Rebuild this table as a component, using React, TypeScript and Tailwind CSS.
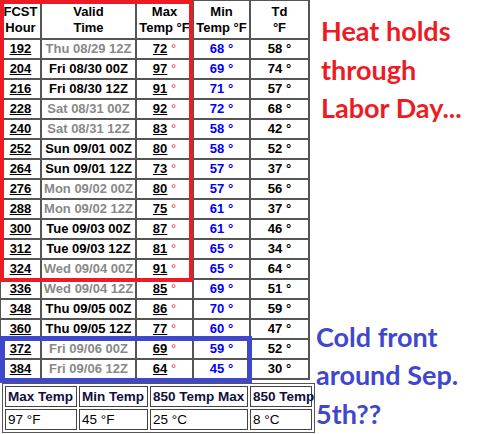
type Row = [string, string, boolean, string, string, string];

const rows: Row[] = [
    ['192', 'Thu 08/29 12Z', true, '72', '68', '58'],
    ['204', 'Fri 08/30 00Z', false, '97', '69', '74'],
    ['216', 'Fri 08/30 12Z', false, '91', '71', '57'],
    ['228', 'Sat 08/31 00Z', true, '92', '72', '68'],
    ['240', 'Sat 08/31 12Z', true, '83', '58', '42'],
    ['252', 'Sun 09/01 00Z', false, '80', '58', '52'],
    ['264', 'Sun 09/01 12Z', false, '73', '57', '37'],
    ['276', 'Mon 09/02 00Z', true, '80', '57', '56'],
    ['288', 'Mon 09/02 12Z', true, '75', '61', '37'],
    ['300', 'Tue 09/03 00Z', false, '87', '61', '46'],
    ['312', 'Tue 09/03 12Z', false, '81', '65', '34'],
    ['324', 'Wed 09/04 00Z', true, '91', '65', '64'],
    ['336', 'Wed 09/04 12Z', true, '85', '69', '51'],
    ['348', 'Thu 09/05 00Z', false, '86', '70', '59'],
    ['360', 'Thu 09/05 12Z', false, '77', '60', '47'],
    ['372', 'Fri 09/06 00Z', true, '69', '59', '52'],
    ['384', 'Fri 09/06 12Z', true, '64', '45', '30'],
];

const cell = "border-2 border-[#555] p-0 text-center align-middle";

const ForecastTable = () => {
    return (
        <table className="table-fixed border-collapse w-[309px] -ml-[1px] -mt-[1px] text-[13px] font-bold leading-[16px]">
            <colgroup>
                <col className="w-[41px]" />
                <col className="w-[95px]" />
                <col className="w-[57px]" />
                <col className="w-[57px]" />
                <col className="w-[59px]" />
            </colgroup>
            <thead>
                <tr className="h-[39px]">
                    <th className={cell + " font-bold"}>FCST<br />Hour</th>
                    <th className={cell + " font-bold"}>Valid<br />Time</th>
                    <th className={cell + " font-bold whitespace-nowrap"}>Max<br />Temp °F</th>
                    <th className={cell + " font-bold whitespace-nowrap"}>Min<br />Temp °F</th>
                    <th className={cell + " font-bold"}>Td<br />°F</th>
                </tr>
            </thead>
            <tbody>
                {rows.map(([hour, time, gray, max, min, td]) => (
                    <tr key={hour} className="h-[20px]">
                        <td className={cell}><span className="underline">{hour}</span></td>
                        <td className={cell + (gray ? " text-[#888]" : " text-black")}>{time}</td>
                        <td className={cell}>
                            <span className="underline">{max}</span>
                            <span className="text-[#f03030] font-normal"> °</span>
                        </td>
                        <td className={cell + " text-[#0000ff]"}>{min} °</td>
                        <td className={cell}>{td} °</td>
                    </tr>
                ))}
            </tbody>
        </table>
    );
};

const SummaryTable = () => {
    const box = "border border-[#444] px-[2px] py-0 text-left whitespace-nowrap h-[21px]";
    return (
        <div className="w-[307px] mt-[3px]">
            <table className="border-separate border-spacing-[2px] border border-[#555] ml-[2px] text-[13.5px] leading-[16px] w-[307px] table-fixed">
                <colgroup>
                    <col className="w-[72px]" />
                    <col className="w-[69px]" />
                    <col className="w-[98px]" />
                    <col className="w-[62px]" />
                </colgroup>
                <tbody>
                    <tr>
                        <td className={box + " font-bold text-[#10103a]"}>Max Temp</td>
                        <td className={box + " font-bold text-[#10103a]"}>Min Temp</td>
                        <td className={box + " font-bold text-[#10103a]"}>850 Temp Max</td>
                        <td className={box + " font-bold text-[#10103a]"}>850 Temp</td>
                    </tr>
                    <tr>
                        <td className={box}>97 °F</td>
                        <td className={box}>45 °F</td>
                        <td className={box}>25 °C</td>
                        <td className={box}>8 °C</td>
                    </tr>
                </tbody>
            </table>
        </div>
    );
};

export default function App() {
    return (
        <div className="relative w-[497px] h-[434px] overflow-hidden bg-white text-black font-['Liberation_Sans',Arial,sans-serif] flex">
            <div className="w-[307px] flex-shrink-0">
                <ForecastTable />
                <SummaryTable />
            </div>
            <div className="flex flex-col font-['Lato',sans-serif] font-bold text-[27px] leading-[38.5px]">
                <p className="text-[#ed1c24] ml-[14px] mt-[12px]">
                    Heat holds<br />through<br />Labor Day...
                </p>
                <p className="text-[#3f48cc] ml-[9px] mt-[190px]">
                    Cold front<br />around Sep.<br />5th??
                </p>
            </div>
            {/* annotations drawn over the table */}
            <div className="absolute left-0 top-0 w-[193px] h-[282px] border-4 border-[#ed1c24]" />
            <div className="absolute left-0 top-[336px] w-[252px] h-[47px] border-[5px] border-[#3f48cc]" />
        </div>
    );
}
